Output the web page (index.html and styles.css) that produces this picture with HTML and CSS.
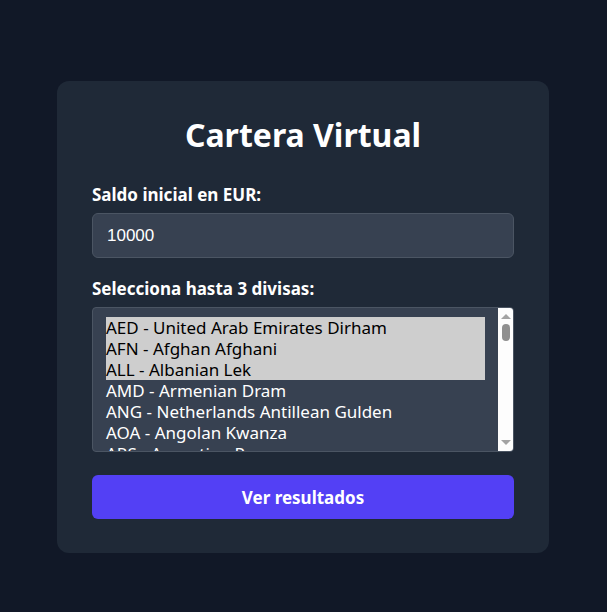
FILE: index.html
```html
<!DOCTYPE html>
<html lang="es">
<head>
<meta charset="utf-8">
<title>Cartera Virtual</title>
<link rel="stylesheet" href="styles.css">
</head>
<body>
<main class="page">
  <form class="card">
    <h1 class="title">Cartera Virtual</h1>
    <label class="label" for="saldo">Saldo inicial en EUR:</label>
    <input class="input" id="saldo" type="text" value="10000">
    <label class="label label-second" id="divisas-label">Selecciona hasta 3 divisas:</label>
    <div class="listbox" role="listbox" aria-multiselectable="true" aria-labelledby="divisas-label">
      <div class="list">
        <div class="option selected" role="option" aria-selected="true">AED - United Arab Emirates Dirham</div>
        <div class="option selected" role="option" aria-selected="true">AFN - Afghan Afghani</div>
        <div class="option selected" role="option" aria-selected="true">ALL - Albanian Lek</div>
        <div class="option" role="option">AMD - Armenian Dram</div>
        <div class="option" role="option">ANG - Netherlands Antillean Gulden</div>
        <div class="option" role="option">AOA - Angolan Kwanza</div>
        <div class="option" role="option">ARS - Argentine Peso</div>
      </div>
      <div class="scrollbar" aria-hidden="true">
        <span class="arrow arrow-up"></span>
        <span class="thumb"></span>
        <span class="track"></span>
        <span class="arrow arrow-down"></span>
      </div>
    </div>
    <button class="button" type="button">Ver resultados</button>
  </form>
</main>
</body>
</html>
```
FILE: styles.css
```css
html, body {
  margin: 0;
  padding: 0;
  background: #111827;
  height: 100%;
}
body {
  font-family: "Noto Sans", sans-serif;
  color: #ffffff;
}
.page {
  display: flex;
  justify-content: center;
  padding-top: 81px;
  padding-right: 1px;
}
.card {
  box-sizing: border-box;
  width: 492px;
  background: #1f2937;
  border-radius: 12px;
  padding: 32px 35px 34px;
  display: flex;
  flex-direction: column;
}
.title {
  margin: 0 0 26px;
  font-size: 32px;
  line-height: 44px;
  font-weight: 700;
  text-align: center;
}
.label {
  display: block;
  font-size: 17px;
  line-height: 24px;
  font-weight: 700;
  margin-bottom: 6px;
}
.label-second {
  margin-top: 19px;
}
.input {
  box-sizing: border-box;
  height: 45px;
  width: 100%;
  background: #374151;
  border: 1px solid #4b5563;
  border-radius: 6px;
  color: #ffffff;
  font-family: "Liberation Sans", Arial, sans-serif;
  font-size: 17px;
  padding: 0 14px;
  outline: none;
}
.listbox {
  box-sizing: border-box;
  height: 145px;
  display: flex;
  background: #374151;
  border: 1px solid #4b5563;
  border-radius: 4px;
  overflow: hidden;
}
.list {
  flex: 1;
  min-width: 0;
  padding: 9px 13px 0 13px;
  overflow: hidden;
}
.option {
  font-size: 17px;
  line-height: 21px;
  height: 21px;
  white-space: nowrap;
  color: #ffffff;
}
.option.selected {
  background: #cecece;
  color: #000000;
}
.scrollbar {
  width: 15px;
  flex: none;
  background: #fdfdfd;
  display: flex;
  flex-direction: column;
  align-items: center;
}
.arrow {
  width: 0;
  height: 0;
  border-left: 5px solid transparent;
  border-right: 5px solid transparent;
}
.arrow-up {
  margin-top: 6px;
  border-bottom: 5px solid #a3a3a3;
}
.arrow-down {
  margin-bottom: 6px;
  border-top: 5px solid #a3a3a3;
}
.thumb {
  margin-top: 5px;
  width: 8px;
  height: 17px;
  border-radius: 4px;
  background: #8f8f8f;
}
.track {
  flex: 1;
}
.button {
  margin-top: 23px;
  height: 44px;
  border: none;
  border-radius: 6px;
  background: #5340f5;
  color: #ffffff;
  font-family: "Noto Sans", sans-serif;
  font-size: 17px;
  font-weight: 700;
  cursor: pointer;
}
```
